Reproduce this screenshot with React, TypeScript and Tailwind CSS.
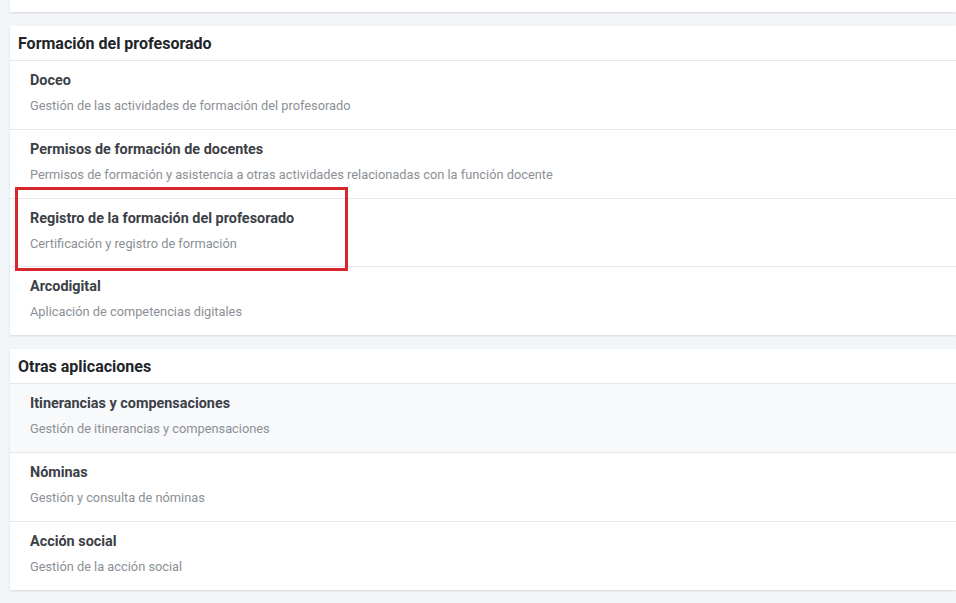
import React from "react";

type Item = { title: string; desc: string; hover?: boolean; marked?: boolean };

const formacion: Item[] = [
  { title: "Doceo", desc: "Gestión de las actividades de formación del profesorado" },
  {
    title: "Permisos de formación de docentes",
    desc: "Permisos de formación y asistencia a otras actividades relacionadas con la función docente",
  },
  {
    title: "Registro de la formación del profesorado",
    desc: "Certificación y registro de formación",
    marked: true,
  },
  { title: "Arcodigital", desc: "Aplicación de competencias digitales" },
];

const otras: Item[] = [
  { title: "Itinerancias y compensaciones", desc: "Gestión de itinerancias y compensaciones", hover: true },
  { title: "Nóminas", desc: "Gestión y consulta de nóminas" },
  { title: "Acción social", desc: "Gestión de la acción social" },
];

function Row({ item }: { item: Item }) {
  return (
    <div
      className={`relative h-[68.8px] border-t border-[#e6e8eb] pl-5 pt-[10px] ${
        item.hover ? "bg-[#f8f9fb]" : "bg-white"
      }`}
    >
      <div className="h-5 text-[14.4px] leading-5 font-bold text-[#3b4046]">{item.title}</div>
      <div className="mt-[5px] h-5 text-[12.8px] leading-5 text-[#8b9096]">{item.desc}</div>
      {item.marked && (
        <div className="pointer-events-none absolute -top-[12px] left-[5px] z-10 h-[84px] w-[333px] border-[3px] border-[#d7262e]" />
      )}
    </div>
  );
}

function Card({ title, items }: { title: string; items: Item[] }) {
  return (
    <div className="ml-[10px] bg-white shadow-[0_1px_2px_rgba(0,0,0,0.12)]">
      <div className="flex h-[34px] items-center pl-2 pt-[2px] text-[16px] font-bold text-[#212529]">{title}</div>
      {items.map((it) => (
        <Row key={it.title} item={it} />
      ))}
    </div>
  );
}

export default function App() {
  return (
    <div
      className="h-[603px] w-[956px] overflow-hidden bg-[#f3f6f9]"
      style={{ fontFamily: "Roboto, 'Liberation Sans', sans-serif" }}
    >
      <div className="ml-[10px] h-[12px] bg-white shadow-[0_1px_2px_rgba(0,0,0,0.12)]" />
      <div className="mt-[14px]">
        <Card title="Formación del profesorado" items={formacion} />
      </div>
      <div className="mt-[14px]">
        <Card title="Otras aplicaciones" items={otras} />
      </div>
    </div>
  );
}
